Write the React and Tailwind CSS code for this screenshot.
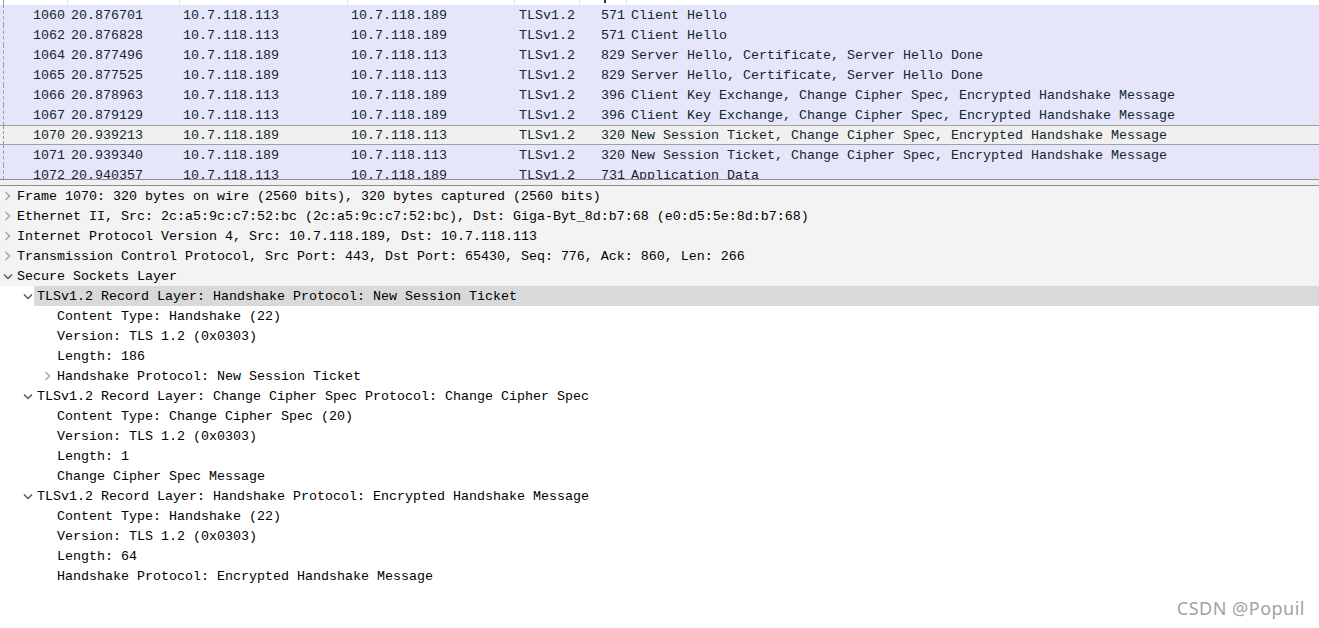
import React from "react";

const packets = [
  ["1060", "20.876701", "10.7.118.113", "10.7.118.189", "TLSv1.2", "571", "Client Hello"],
  ["1062", "20.876828", "10.7.118.113", "10.7.118.189", "TLSv1.2", "571", "Client Hello"],
  ["1064", "20.877496", "10.7.118.189", "10.7.118.113", "TLSv1.2", "829", "Server Hello, Certificate, Server Hello Done"],
  ["1065", "20.877525", "10.7.118.189", "10.7.118.113", "TLSv1.2", "829", "Server Hello, Certificate, Server Hello Done"],
  ["1066", "20.878963", "10.7.118.113", "10.7.118.189", "TLSv1.2", "396", "Client Key Exchange, Change Cipher Spec, Encrypted Handshake Message"],
  ["1067", "20.879129", "10.7.118.113", "10.7.118.189", "TLSv1.2", "396", "Client Key Exchange, Change Cipher Spec, Encrypted Handshake Message"],
  ["1070", "20.939213", "10.7.118.189", "10.7.118.113", "TLSv1.2", "320", "New Session Ticket, Change Cipher Spec, Encrypted Handshake Message", true],
  ["1071", "20.939340", "10.7.118.189", "10.7.118.113", "TLSv1.2", "320", "New Session Ticket, Change Cipher Spec, Encrypted Handshake Message"],
  ["1072", "20.940357", "10.7.118.113", "10.7.118.189", "TLSv1.2", "731", "Application Data"],
];

// [level, arrow ('r' | 'd' | null), text, zone ('g' gray, 'h' highlight, 'w')]
const details = [
  [0, "r", "Frame 1070: 320 bytes on wire (2560 bits), 320 bytes captured (2560 bits)", "g"],
  [0, "r", "Ethernet II, Src: 2c:a5:9c:c7:52:bc (2c:a5:9c:c7:52:bc), Dst: Giga-Byt_8d:b7:68 (e0:d5:5e:8d:b7:68)", "g"],
  [0, "r", "Internet Protocol Version 4, Src: 10.7.118.189, Dst: 10.7.118.113", "g"],
  [0, "r", "Transmission Control Protocol, Src Port: 443, Dst Port: 65430, Seq: 776, Ack: 860, Len: 266", "g"],
  [0, "d", "Secure Sockets Layer", "g"],
  [1, "d", "TLSv1.2 Record Layer: Handshake Protocol: New Session Ticket", "h"],
  [2, null, "Content Type: Handshake (22)", "w"],
  [2, null, "Version: TLS 1.2 (0x0303)", "w"],
  [2, null, "Length: 186", "w"],
  [2, "r", "Handshake Protocol: New Session Ticket", "w"],
  [1, "d", "TLSv1.2 Record Layer: Change Cipher Spec Protocol: Change Cipher Spec", "w"],
  [2, null, "Content Type: Change Cipher Spec (20)", "w"],
  [2, null, "Version: TLS 1.2 (0x0303)", "w"],
  [2, null, "Length: 1", "w"],
  [2, null, "Change Cipher Spec Message", "w"],
  [1, "d", "TLSv1.2 Record Layer: Handshake Protocol: Encrypted Handshake Message", "w"],
  [2, null, "Content Type: Handshake (22)", "w"],
  [2, null, "Version: TLS 1.2 (0x0303)", "w"],
  [2, null, "Length: 64", "w"],
  [2, null, "Handshake Protocol: Encrypted Handshake Message", "w"],
];

function Arrow({ dir }) {
  if (dir === "r") {
    return (
      <svg width="12" height="20" viewBox="0 0 12 20">
        <polyline points="3.5,6 7.5,10 3.5,14" fill="none" stroke="#a8a8a8" strokeWidth="1.5" />
      </svg>
    );
  }
  if (dir === "d") {
    return (
      <svg width="12" height="20" viewBox="0 0 12 20">
        <polyline points="2,8.5 6,12.5 10,8.5" fill="none" stroke="#5a5a5a" strokeWidth="1.5" />
      </svg>
    );
  }
  return <div className="w-[12px]" />;
}

export default function App() {
  return (
    <div
      className="w-[1319px] h-[628px] bg-white overflow-hidden flex flex-col text-[13.33px]"
      style={{ fontFamily: '"Liberation Mono", "DejaVu Sans Mono", monospace' }}
    >
      {/* Packet list */}
      <div className="h-[179px] overflow-hidden flex flex-col shrink-0">
        <div className="h-[5px] flex shrink-0 bg-white">
          <div className="ml-[3px] w-[65px] border-l border-dashed border-[#9a9a9a] border-r border-r-[#e3e3e3]" />
          <div className="w-[112px] border-r border-[#e3e3e3]" />
          <div className="w-[168px] border-r border-[#e3e3e3]" />
          <div className="w-[167px] border-r border-[#e3e3e3]" />
          <div className="w-[65px] border-r border-[#e3e3e3]" />
          <div className="w-[47px] border-r border-[#e3e3e3] flex justify-end">
            <div className="w-[2px] h-[3px] bg-[#333] mr-[20px]" />
          </div>
          <div className="flex-1" />
        </div>
        {packets.map((p) => {
          const sel = p[7];
          return (
            <div
              key={p[0]}
              className={
                "flex shrink-0 whitespace-nowrap text-[#12272e] " +
                (sel
                  ? "h-[20px] bg-[#f0f0f0] border-y border-[#a0a0a0] leading-[20px]"
                  : "h-[20px] bg-[#e6e6fb] leading-[22px]")
              }
            >
              <div className="ml-[3px] w-[65px] border-l border-dashed border-[#9a9a9a] text-right pr-[3px]">{p[0]}</div>
              <div className="w-[112px] pl-[3px]">{p[1]}</div>
              <div className="w-[168px] pl-[3px]">{p[2]}</div>
              <div className="w-[167px] pl-[3px]">{p[3]}</div>
              <div className="w-[65px] pl-[4px]">{p[4]}</div>
              <div className="w-[47px] text-right pr-[2px]">{p[5]}</div>
              <div className="flex-1 pl-[4px]">{p[6]}</div>
            </div>
          );
        })}
      </div>
      <div className="h-[7px] shrink-0 bg-[#f0f0f0] border-y border-[#8f8f8f]" />

      {/* Packet details */}
      <div className="flex flex-col text-black">
        {details.map((d, i) => {
          const [lvl, arrow, text, zone] = d;
          const pad = lvl === 0 ? "pl-[2px]" : lvl === 1 ? "pl-[22px]" : "pl-[42px]";
          return (
            <div
              key={i}
              className={
                "h-[20px] flex whitespace-nowrap leading-[22px] " +
                (zone === "g" ? "bg-[#f3f3f3]" : "bg-white")
              }
            >
              <div className={"flex shrink-0 " + pad}>
                <Arrow dir={arrow} />
              </div>
              <div
                className={
                  "flex-1 pl-[3px] " + (zone === "h" ? "bg-[#d9d9d9]" : "")
                }
              >
                {text}
              </div>
            </div>
          );
        })}
        <div className="flex justify-end pr-[14px] pt-[9px]">
          <span
            className="text-[#a3a3a3] text-[18px] tracking-[0.5px]"
            style={{ fontFamily: '"Noto Sans", "Open Sans", sans-serif' }}
          >
            CSDN @Popuil
          </span>
        </div>
      </div>
    </div>
  );
}
